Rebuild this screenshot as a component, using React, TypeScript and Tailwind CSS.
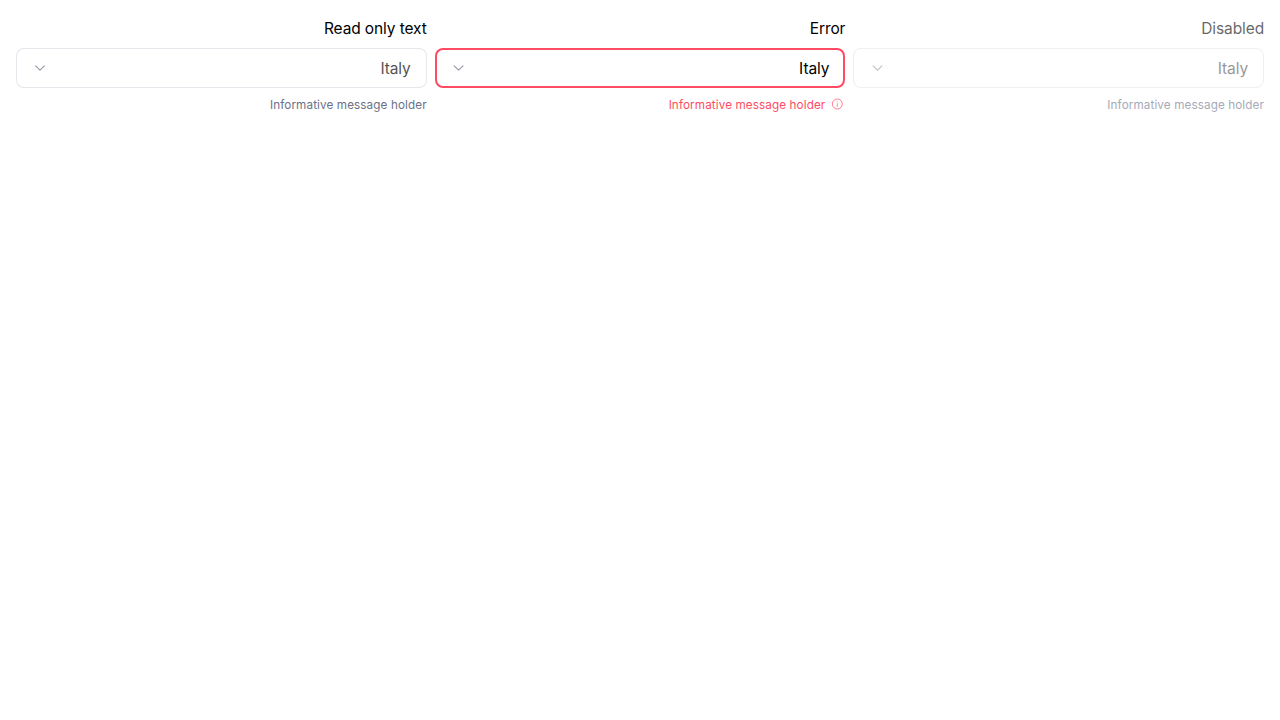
type FieldProps = {
  label: string;
  state: "readonly" | "error" | "disabled";
};

const chevronPaths = {
  readonly: "M3.6 5.8L8 10.2L12.4 5.8",
  error: "M3.2 5.8L7.6 10.2L12 5.8",
  disabled: "M4.1 5.8L8.5 10.2L12.9 5.8",
};

function Field({ label, state }: FieldProps) {
  const error = state === "error";
  return (
    <div className={`flex min-w-0 flex-1 flex-col ${state === "disabled" ? "opacity-60" : ""}`}>
      <div className="h-6 pt-px text-right text-[15.5px] leading-6 tracking-[-0.11px] text-black">{label}</div>
      <div
        className={`mt-2 flex h-10 items-center justify-between rounded-lg bg-white px-4 ${
          error ? "inset-ring-2 inset-ring-[#ff4b63]" : "inset-ring-1 inset-ring-[#e6e7ec]"
        }`}
      >
        <svg className="size-4 text-[#9597a6]" viewBox="0 0 16 16" fill="none" stroke="currentColor" strokeWidth="1.1" strokeLinecap="round" strokeLinejoin="round">
          <path d={chevronPaths[state]} />
        </svg>
        <span className={`pt-0.5 text-[15.5px] leading-6 tracking-[-0.11px] ${error ? "text-black" : "text-[#555555]"}`}>Italy</span>
      </div>
      <div className={`mt-[9px] flex items-center justify-end text-[11.7px] leading-4 tracking-[0.11px] ${error ? "text-[#ff4b63]" : "text-[#6b7188]"}`}>
        <span>Informative message holder</span>
        {error && (
          <svg className="-mt-0.5 mr-0.5 ml-1.5 size-3" viewBox="0 0 12 12" fill="none" stroke="currentColor" strokeWidth="0.7">
            <circle cx="6.3" cy="6" r="5" />
            <path d="M6.3 5.3V8.6M6.3 3.4V4.3" />
          </svg>
        )}
      </div>
    </div>
  );
}

export default function App() {
  return (
    <div className="flex min-h-screen items-start gap-2 bg-white p-4 font-['Inter',sans-serif]">
      <Field label="Read only text" state="readonly" />
      <Field label="Error" state="error" />
      <Field label="Disabled" state="disabled" />
    </div>
  );
}
